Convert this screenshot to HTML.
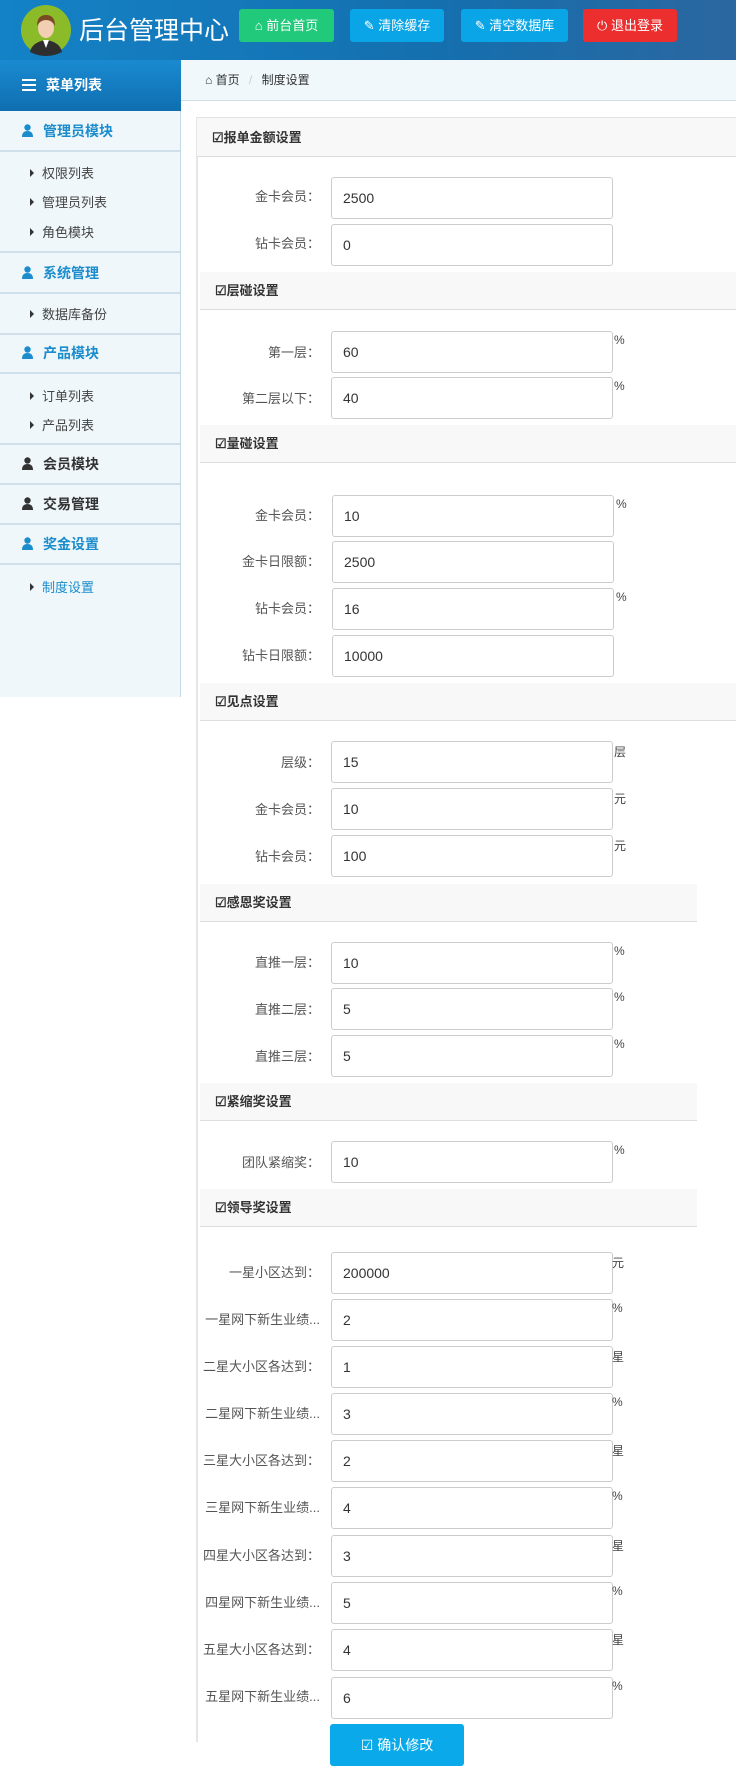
<!DOCTYPE html>
<html><head><meta charset="utf-8"><style>
*{margin:0;padding:0;box-sizing:border-box}
body{width:736px;height:1778px;position:relative;background:#fff;font-family:"Liberation Sans","Noto Sans CJK SC",sans-serif;overflow:hidden}
.a{position:absolute}
.hdr{left:0;top:0;width:736px;height:60px;background:linear-gradient(90deg,#1382c6,#156fae 60%,#2b67a0)}
.btn{top:9px;height:33px;border-radius:3px;color:#fff;font-size:13px;line-height:33px;text-align:center}
.side{left:0;top:60px;width:181px;height:637px;background:#eff7fb;border-right:1px solid #c5d9e5}
.mh{left:0;top:60px;width:181px;height:51px;background:linear-gradient(#1a8ad0,#0f6fb0);color:#fff;font-weight:bold;font-size:14px;line-height:51px;padding-left:46px}
.mod{left:0;width:180px;height:40px;font-size:14px;font-weight:bold;line-height:40px;padding-left:43px;color:#1b8ccc}
.ln{left:0;width:180px;height:2px;background:#cfe0ea}
.sub{left:30px;font-size:13px;color:#444}
.sub:before{content:"";display:inline-block;border-left:4px solid #333;border-top:4px solid transparent;border-bottom:4px solid transparent;margin-right:8px;vertical-align:1px}
.pi{position:absolute;left:22px;top:13px;width:11px;height:13px}
.sh{height:38px;background:#f8f8f8;border-bottom:1px solid #ddd;font-size:13px;font-weight:bold;color:#333;line-height:38px;padding-left:15px}
.lb{width:130px;text-align:right;font-size:13px;color:#555;left:190px}
.in{width:282px;height:42px;border:1px solid #ccc;border-radius:3px;background:#fff;font-size:14px;color:#333;line-height:40px;padding-left:11px}
.u{font-size:12px;color:#444}
</style></head><body>
<div class="a hdr"></div>
<svg class="a" style="left:20px;top:4px" width="52" height="52" viewBox="0 0 52 52"><circle cx="26" cy="26" r="25" fill="#8cbb2a"/><path d="M10 48 Q12 38 26 36 Q40 38 42 48 Q34 52 26 52 Q18 52 10 48Z" fill="#2e2e2e"/><path d="M23 36 L26 44 L29 36Z" fill="#fff"/><ellipse cx="26" cy="24" rx="8" ry="10" fill="#f2cfb3"/><path d="M17 22 Q17 11 26 11 Q35 11 35 22 Q32 16 26 16 Q20 16 17 22Z" fill="#7a4a22"/></svg>
<div class="a" style="left:79px;top:11px;font-size:25px;color:#fff">后台管理中心</div>
<div class="a btn" style="left:239px;width:95px;background:#21c97a">⌂ 前台首页</div>
<div class="a btn" style="left:350px;width:94px;background:#0aa5e6">✎ 清除缓存</div>
<div class="a btn" style="left:461px;width:107px;background:#0aa5e6">✎ 清空数据库</div>
<div class="a btn" style="left:583px;width:94px;background:#ec2e2e">⏻ 退出登录</div>

<div class="a side"></div>
<div class="a mh"><span style="position:absolute;left:22px;top:19px;width:14px;height:12px;border-top:2px solid #fff;border-bottom:2px solid #fff"><span style="position:absolute;left:0;top:3px;width:14px;height:2px;background:#fff"></span></span>菜单列表</div>
<div class="a mod" style="top:111px">管理员模块</div>
<div class="a ln" style="top:150px"></div>
<div class="a sub" style="top:163px">权限列表</div>
<div class="a sub" style="top:192px">管理员列表</div>
<div class="a sub" style="top:222px">角色模块</div>
<div class="a ln" style="top:251px"></div>
<div class="a mod" style="top:253px">系统管理</div>
<div class="a ln" style="top:292px"></div>
<div class="a sub" style="top:304px">数据库备份</div>
<div class="a ln" style="top:333px"></div>
<div class="a mod" style="top:333px">产品模块</div>
<div class="a ln" style="top:372px"></div>
<div class="a sub" style="top:386px">订单列表</div>
<div class="a sub" style="top:415px">产品列表</div>
<div class="a ln" style="top:443px"></div>
<div class="a mod" style="top:444px;color:#333">会员模块</div>
<div class="a ln" style="top:483px"></div>
<div class="a mod" style="top:484px;color:#333">交易管理</div>
<div class="a ln" style="top:523px"></div>
<div class="a mod" style="top:524px">奖金设置</div>
<div class="a ln" style="top:563px"></div>
<div class="a sub" style="top:577px;color:#1b8ccc">制度设置</div>
<svg class="a" style="left:22px;top:124px" width="11" height="13"><circle cx="5.5" cy="3.5" r="3.2" fill="#1b8ccc"/><path d="M0 13 Q0 7 5.5 7 Q11 7 11 13Z" fill="#1b8ccc"/></svg>
<svg class="a" style="left:22px;top:266px" width="11" height="13"><circle cx="5.5" cy="3.5" r="3.2" fill="#1b8ccc"/><path d="M0 13 Q0 7 5.5 7 Q11 7 11 13Z" fill="#1b8ccc"/></svg>
<svg class="a" style="left:22px;top:346px" width="11" height="13"><circle cx="5.5" cy="3.5" r="3.2" fill="#1b8ccc"/><path d="M0 13 Q0 7 5.5 7 Q11 7 11 13Z" fill="#1b8ccc"/></svg>
<svg class="a" style="left:22px;top:457px" width="11" height="13"><circle cx="5.5" cy="3.5" r="3.2" fill="#333"/><path d="M0 13 Q0 7 5.5 7 Q11 7 11 13Z" fill="#333"/></svg>
<svg class="a" style="left:22px;top:497px" width="11" height="13"><circle cx="5.5" cy="3.5" r="3.2" fill="#333"/><path d="M0 13 Q0 7 5.5 7 Q11 7 11 13Z" fill="#333"/></svg>
<svg class="a" style="left:22px;top:537px" width="11" height="13"><circle cx="5.5" cy="3.5" r="3.2" fill="#1b8ccc"/><path d="M0 13 Q0 7 5.5 7 Q11 7 11 13Z" fill="#1b8ccc"/></svg>

<div class="a" style="left:181px;top:60px;width:555px;height:41px;background:#f1f8fc;border-bottom:1px solid #cfe0ea;font-size:12px;color:#333;line-height:40px;padding-left:24px">⌂ 首页 <span style="color:#ccc;margin:0 6px">/</span> 制度设置</div>
<div class="a" style="left:196px;top:117px;width:2px;height:1625px;background:#e6e6e6"></div>

<div class="a sh" style="left:197px;top:117px;width:539px;height:40px;line-height:40px;border-top:1px solid #e3e3e3">☑报单金额设置</div>
<div class="a lb" style="top:186px">金卡会员：</div><div class="a in" style="left:331px;top:177px">2500</div>
<div class="a lb" style="top:233px">钻卡会员：</div><div class="a in" style="left:331px;top:224px">0</div>

<div class="a sh" style="left:200px;top:272px;width:536px">☑层碰设置</div>
<div class="a lb" style="top:342px">第一层：</div><div class="a in" style="left:331px;top:331px">60</div><div class="a u" style="left:614px;top:333px">%</div>
<div class="a lb" style="top:388px">第二层以下：</div><div class="a in" style="left:331px;top:377px">40</div><div class="a u" style="left:614px;top:379px">%</div>

<div class="a sh" style="left:200px;top:425px;width:536px">☑量碰设置</div>
<div class="a lb" style="top:505px">金卡会员：</div><div class="a in" style="left:332px;top:495px">10</div><div class="a u" style="left:616px;top:497px">%</div>
<div class="a lb" style="top:551px">金卡日限额：</div><div class="a in" style="left:332px;top:541px">2500</div>
<div class="a lb" style="top:598px">钻卡会员：</div><div class="a in" style="left:332px;top:588px">16</div><div class="a u" style="left:616px;top:590px">%</div>
<div class="a lb" style="top:645px">钻卡日限额：</div><div class="a in" style="left:332px;top:635px">10000</div>

<div class="a sh" style="left:200px;top:683px;width:536px">☑见点设置</div>
<div class="a lb" style="top:752px">层级：</div><div class="a in" style="left:331px;top:741px">15</div><div class="a u" style="left:614px;top:743px">层</div>
<div class="a lb" style="top:799px">金卡会员：</div><div class="a in" style="left:331px;top:788px">10</div><div class="a u" style="left:614px;top:790px">元</div>
<div class="a lb" style="top:846px">钻卡会员：</div><div class="a in" style="left:331px;top:835px">100</div><div class="a u" style="left:614px;top:837px">元</div>

<div class="a sh" style="left:200px;top:884px;width:497px">☑感恩奖设置</div>
<div class="a lb" style="top:952px">直推一层：</div><div class="a in" style="left:331px;top:942px">10</div><div class="a u" style="left:614px;top:944px">%</div>
<div class="a lb" style="top:999px">直推二层：</div><div class="a in" style="left:331px;top:988px">5</div><div class="a u" style="left:614px;top:990px">%</div>
<div class="a lb" style="top:1046px">直推三层：</div><div class="a in" style="left:331px;top:1035px">5</div><div class="a u" style="left:614px;top:1037px">%</div>

<div class="a sh" style="left:200px;top:1083px;width:497px">☑紧缩奖设置</div>
<div class="a lb" style="top:1152px">团队紧缩奖：</div><div class="a in" style="left:331px;top:1141px">10</div><div class="a u" style="left:614px;top:1143px">%</div>

<div class="a sh" style="left:200px;top:1189px;width:497px">☑领导奖设置</div>
<div class="a lb" style="top:1262px">一星小区达到：</div><div class="a in" style="left:331px;top:1252px">200000</div><div class="a u" style="left:612px;top:1254px">元</div>
<div class="a lb" style="top:1309px">一星网下新生业绩...</div><div class="a in" style="left:331px;top:1299px">2</div><div class="a u" style="left:612px;top:1301px">%</div>
<div class="a lb" style="top:1356px">二星大小区各达到：</div><div class="a in" style="left:331px;top:1346px">1</div><div class="a u" style="left:612px;top:1348px">星</div>
<div class="a lb" style="top:1403px">二星网下新生业绩...</div><div class="a in" style="left:331px;top:1393px">3</div><div class="a u" style="left:612px;top:1395px">%</div>
<div class="a lb" style="top:1450px">三星大小区各达到：</div><div class="a in" style="left:331px;top:1440px">2</div><div class="a u" style="left:612px;top:1442px">星</div>
<div class="a lb" style="top:1497px">三星网下新生业绩...</div><div class="a in" style="left:331px;top:1487px">4</div><div class="a u" style="left:612px;top:1489px">%</div>
<div class="a lb" style="top:1545px">四星大小区各达到：</div><div class="a in" style="left:331px;top:1535px">3</div><div class="a u" style="left:612px;top:1537px">星</div>
<div class="a lb" style="top:1592px">四星网下新生业绩...</div><div class="a in" style="left:331px;top:1582px">5</div><div class="a u" style="left:612px;top:1584px">%</div>
<div class="a lb" style="top:1639px">五星大小区各达到：</div><div class="a in" style="left:331px;top:1629px">4</div><div class="a u" style="left:612px;top:1631px">星</div>
<div class="a lb" style="top:1686px">五星网下新生业绩...</div><div class="a in" style="left:331px;top:1677px">6</div><div class="a u" style="left:612px;top:1679px">%</div>

<div class="a" style="left:330px;top:1724px;width:134px;height:42px;background:#0aaaea;border-radius:3px;color:#fff;font-size:14px;line-height:42px;text-align:center">☑ 确认修改</div>
</body></html>
